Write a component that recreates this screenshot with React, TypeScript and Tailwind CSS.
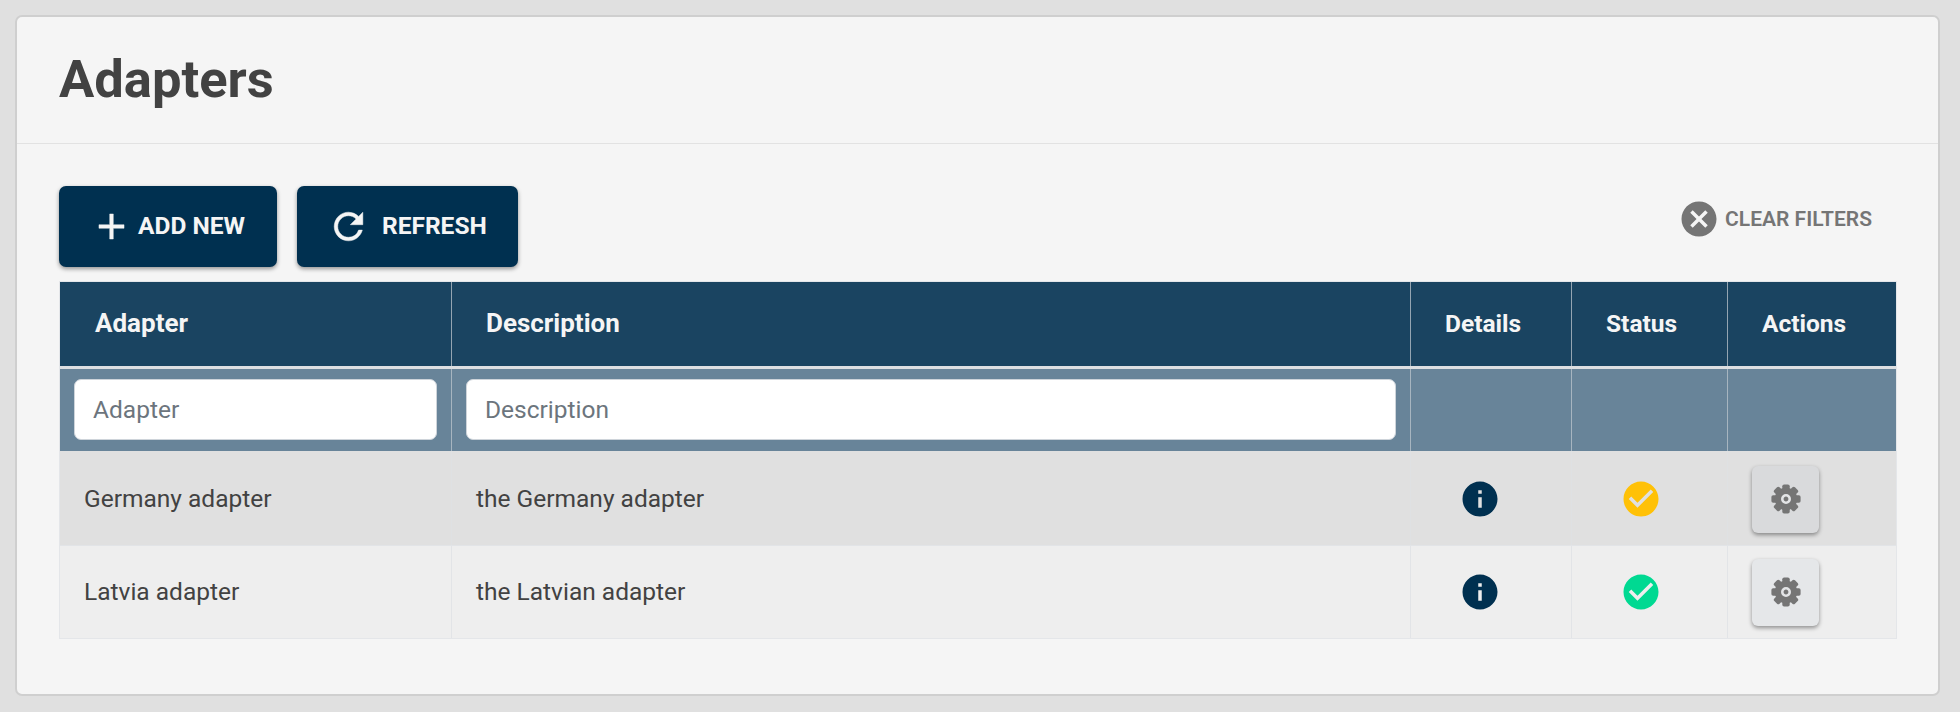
import { MdCancel, MdCheckCircle, MdInfo } from "react-icons/md";

type Adapter = { name: string; description: string; row: string; status: string; button: string };

const adapters: Adapter[] = [
  {
    name: "Germany adapter",
    description: "the Germany adapter",
    row: "h-[95px] border-b border-[#e2e4e7] bg-[#e0e0e0] [&>div]:border-[#dfe1e3] [&>div]:pt-[2px]",
    status: "text-[#ffc107]",
    button: "bg-[#d9dadc]",
  },
  {
    name: "Latvia adapter",
    description: "the Latvian adapter",
    row: "h-[92px] bg-[#eeeeee] [&>div]:border-[#e2e4e7]",
    status: "text-[#00d992]",
    button: "bg-[#e5e7e9]",
  },
];

const headings = ["Adapter", "Description", "Details", "Status", "Actions"];
const columns = "grid grid-cols-[392px_959px_161px_156px_168px]";
const teeth = [0, 45, 90, 135];

function ActionIcon({ path }: { path: string }) {
  return (
    <svg viewBox="0 0 24 24" className="size-[43px]" fill="currentColor" stroke="currentColor" strokeWidth="0.25">
      <path d={path} />
    </svg>
  );
}

function Gear() {
  return (
    <svg viewBox="-15 -15 30 30" className="size-[30px] text-[#757575]" fill="currentColor">
      {teeth.map((angle) => (
        <rect key={angle} x="-3.7" y="-14.6" width="7.4" height="29.2" rx="1.8" transform={`rotate(${angle})`} />
      ))}
      <circle r="11.2" />
      <circle r="3.7" fill="none" stroke="#e3e4e6" strokeWidth="2.6" />
    </svg>
  );
}

export default function App() {
  return (
    <div className="h-[712px] w-[1960px] bg-[#e0e0e0] pt-[15px] pl-[15px] font-[Roboto,sans-serif] text-[24.5px] text-[#424242]">
      <main className="h-[681px] w-[1925px] rounded-[7px] border-2 border-[#cfcfcf] bg-[#f5f5f5]">
        <header className="h-[127px] border-b border-[#e2e2e2] pt-[29px] pl-[42px]">
          <h1 className="text-[52.5px] leading-[66px] font-bold">Adapters</h1>
        </header>
        <div className="flex h-[137px] items-start justify-between pt-[42px] pr-[66px] pl-[42px] font-bold">
          <div className="flex gap-[20px] text-[#f5f5f5]">
            <button className="flex h-[81px] w-[218px] items-center rounded-[7px] bg-[#003050] pl-[31px] shadow-[0_2px_4px_rgba(0,0,0,0.4)]">
              <ActionIcon path="M19 13h-6v6h-2v-6H5v-2h6V5h2v6h6v2z" />
              <span className="ml-[5px]">ADD NEW</span>
            </button>
            <button className="flex h-[81px] w-[221px] items-center rounded-[7px] bg-[#003050] pl-[30px] shadow-[0_2px_4px_rgba(0,0,0,0.4)]">
              <ActionIcon path="M17.65 6.35A7.958 7.958 0 0 0 12 4c-4.42 0-7.99 3.58-7.99 8s3.57 8 7.99 8c3.73 0 6.84-2.55 7.73-6h-2.08A5.99 5.99 0 0 1 12 18c-3.31 0-6-2.69-6-6s2.69-6 6-6c1.66 0 3.14.69 4.22 1.78L13 11h7V4l-2.35 2.35z" />
              <span className="ml-[12px]">REFRESH</span>
            </button>
          </div>
          <button className="mt-[12px] flex items-center text-[21px] font-semibold text-[#757575]">
            <MdCancel className="mr-[5px] size-[42px]" />
            <span className="mt-px">CLEAR FILTERS</span>
          </button>
        </div>
        <section className="ml-[42px] w-[1838px] border border-[#e4e6e9]">
          <div className={`${columns} h-[84px] bg-[#1a4461] font-bold text-[#f5f5f5]`}>
            {headings.map((heading, index) => (
              <div
                key={heading}
                className={`flex items-center border-r border-[#94a5b2] last:border-r-0 ${index < 2 ? "pb-px text-[26px]" : ""} ${index === 0 ? "pl-[35px]" : "pl-[34px]"}`}
              >
                {heading}
              </div>
            ))}
          </div>
          <div className="h-[3px] bg-[#dcdfe2]" />
          <div className={`${columns} h-[82px] bg-[#688499]`}>
            {headings.map((heading, index) => (
              <div key={heading} className="border-r border-[#a7b5c0] px-[14px] pt-[10px] last:border-r-0">
                {index < 2 && (
                  <input
                    placeholder={heading}
                    className="h-[61px] w-full rounded-[7px] border border-[#ced4da] bg-white px-[18px] placeholder:text-[#6c757d]"
                  />
                )}
              </div>
            ))}
          </div>
          {adapters.map((adapter) => (
            <div
              key={adapter.name}
              className={`${columns} ${adapter.row} [&>div]:flex [&>div]:items-center [&>div]:border-r [&>div:last-child]:border-r-0`}
            >
              <div className="pl-[24px]">
                <span className="mt-px">{adapter.name}</span>
              </div>
              <div className="pl-[24px]">
                <span className="mt-px">{adapter.description}</span>
              </div>
              <div className="pl-[48px] text-[#003050]">
                <MdInfo className="size-[42px]" />
              </div>
              <div className={`pl-[48px] ${adapter.status}`}>
                <MdCheckCircle className="size-[42px]" />
              </div>
              <div className="pl-[24px]">
                <button className={`flex h-[67px] w-[67px] items-center justify-center rounded-[6px] shadow-[0_2px_4px_rgba(0,0,0,0.4)] ${adapter.button}`}>
                  <Gear />
                </button>
              </div>
            </div>
          ))}
        </section>
      </main>
    </div>
  );
}
